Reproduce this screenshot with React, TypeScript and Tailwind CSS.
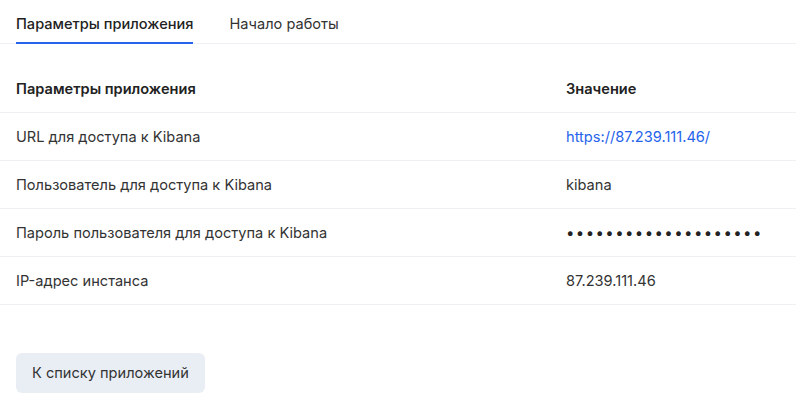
const ROWS = [
  { label: "URL для доступа к Kibana", value: "https://87.239.111.46/", link: true },
  { label: "Пользователь для доступа к Kibana", value: "kibana" },
  { label: "Пароль пользователя для доступа к Kibana", value: "••••••••••••••••••••", secret: true },
  { label: "IP-адрес инстанса", value: "87.239.111.46" },
];

export default function App() {
  return (
    <div className="w-[796px] h-[402px] bg-white text-[14.6px] leading-5 text-[#333] font-['Inter',sans-serif] overflow-hidden">
      {/* Tabs */}
      <div className="flex gap-9 px-4 border-b border-[#eef0f3]">
        <div className="pt-[14px] pb-2 border-b-2 border-[#2563eb] -mb-px font-medium text-[#222]">
          Параметры приложения
        </div>
        <div className="pt-[14px] pb-2 text-[#333]">Начало работы</div>
      </div>

      {/* Table */}
      <div className="mt-[21px]">
        <div className="grid grid-cols-[550px_1fr] h-12 items-center border-b border-[#eef0f3] font-semibold text-[#222]">
          <div className="px-4">Параметры приложения</div>
          <div className="px-4">Значение</div>
        </div>
        {ROWS.map((r) => (
          <div key={r.label} className="grid grid-cols-[550px_1fr] h-12 items-center border-b border-[#eef0f3]">
            <div className="px-4">{r.label}</div>
            <div className="px-4">
              {r.link ? (
                <span className="text-[#2563eb]">{r.value}</span>
              ) : r.secret ? (
                <span className="tracking-[1.4px] text-[15px] text-[#222]">{r.value}</span>
              ) : (
                r.value
              )}
            </div>
          </div>
        ))}
      </div>

      <div className="px-4 mt-12">
        <button className="h-10 px-4 rounded-md bg-[#e9eef5] text-[#333]">
          К списку приложений
        </button>
      </div>
    </div>
  );
}
